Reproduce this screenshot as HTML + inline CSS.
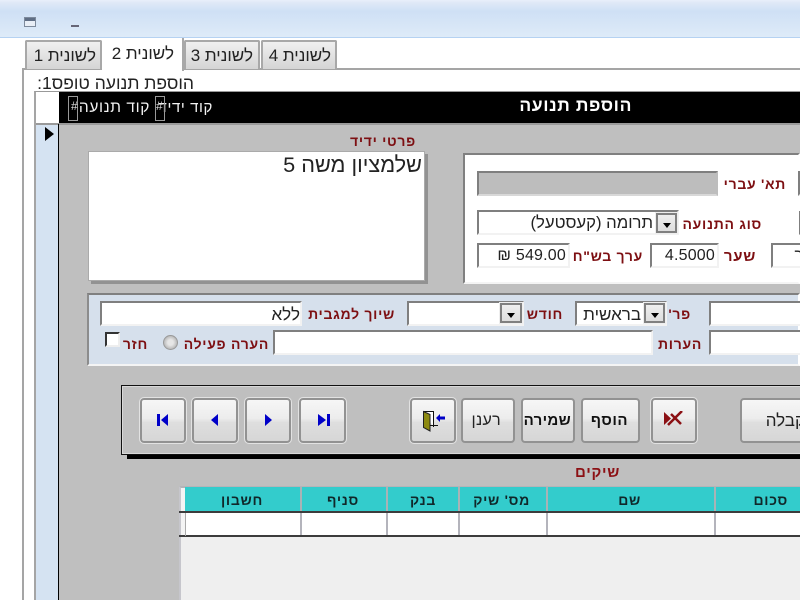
<!DOCTYPE html>
<html lang="he"><head><meta charset="utf-8"><title>הוספת תנועה</title>
<style>
*{box-sizing:border-box}
html,body{margin:0;padding:0;width:800px;height:600px;overflow:hidden;background:#fff}
body{position:relative;font-family:"Liberation Sans","DejaVu Sans",sans-serif;color:#111;filter:blur(.3px)}
.a{position:absolute}
.t{position:absolute;white-space:nowrap;direction:rtl;line-height:1}
.l{position:absolute;white-space:nowrap;direction:rtl;line-height:1;font-weight:bold;color:#7d0f12;font-size:14px;letter-spacing:.7px}
.h{position:absolute;white-space:nowrap;direction:rtl;line-height:1;font-weight:bold;color:#10282a;font-size:14px;letter-spacing:.7px}
.tab{position:absolute;background:linear-gradient(#efefef,#d4d4d4);border:2px solid #a8a8a8;border-bottom:0;border-radius:2px 2px 0 0}
.f{position:absolute;background:#fff;border:2px solid;border-color:#7f7f7f #f2f2f2 #f2f2f2 #7f7f7f}
.cb{position:absolute;background:linear-gradient(#eee,#ddd);border:2px solid #808080;outline:1px solid #eee}
.cb:after{content:"";position:absolute;left:5px;top:8px;border:4px solid transparent;border-top:5px solid #000;border-bottom:0}
.b{position:absolute;top:398px;height:45px;border:2px solid #929292;border-radius:4px;background:linear-gradient(#f6f6f6 0,#ececec 45%,#dedede 55%,#d6d6d6 100%)}
.o{outline:1px solid #e2e2e2}
.sep{position:absolute;width:2px;background:#a9b3b6}
.sep2{position:absolute;width:2px;background:#b4b4bc}
</style></head><body>

<div class="a" style="left:0;top:0;width:800px;height:38px;background:linear-gradient(#e9effa 0,#dfe8f6 8%,#cfe0f5 30%,#deebf8 100%);border-bottom:1px solid #b5d2f2"></div>
<svg class="a" style="left:24px;top:17px" width="13" height="11"><rect x=".5" y=".5" width="11" height="9" fill="#e8eef6" stroke="#7d8a9c"/><rect x="1" y="1" width="10" height="3" fill="#5f6e85"/></svg>
<div class="a" style="left:71px;top:25px;width:8px;height:2px;background:#667"></div>

<div class="a" style="left:22px;top:68px;width:778px;height:532px;background:#fff;border-left:2px solid #a5a5a5;border-top:2px solid #a5a5a5"></div>
<div class="tab" style="left:25px;top:40px;width:77px;height:29px"></div>
<div class="t" style="right:704px;top:47px;font-size:17px;color:#222">לשונית 1</div>
<div class="a" style="left:102px;top:38px;width:82px;height:33px;background:#fff;border-right:2px solid #a8a8a8"></div>
<div class="t" style="right:626px;top:45px;font-size:17px;color:#222">לשונית 2</div>
<div class="tab" style="left:184px;top:40px;width:76px;height:29px"></div>
<div class="t" style="right:547px;top:47px;font-size:17px;color:#222">לשונית 3</div>
<div class="tab" style="left:261px;top:40px;width:76px;height:29px"></div>
<div class="t" style="right:469px;top:47px;font-size:17px;color:#222">לשונית 4</div>

<div class="t" style="right:606px;top:75px;font-size:17.5px;color:#222">הוספת תנועה טופס1:</div>

<div class="a" style="left:34px;top:91px;width:766px;height:509px;background:#fff;border-left:2px solid #a5a5a5;border-top:1px solid #999"></div>
<div class="a" style="left:59px;top:92px;width:741px;height:31px;background:#000"></div>
<div class="a" style="left:36px;top:123px;width:764px;height:2px;background:#9a9a9a"></div>
<div class="a" style="left:36px;top:125px;width:22px;height:475px;background:#d5e3f2"></div>
<div class="a" style="left:58px;top:124px;width:1px;height:476px;background:#000"></div>
<div class="a" style="left:59px;top:125px;width:741px;height:475px;background:#bfbfbf"></div>
<div class="a" style="left:45px;top:127px;border:7px solid transparent;border-left:9px solid #000;border-right:0"></div>

<div class="t" style="right:587px;top:100px;font-size:15px;color:#f2f2f2;letter-spacing:.6px">קוד ידיד</div>
<div class="t" style="right:650px;top:100px;font-size:15.5px;color:#f2f2f2;letter-spacing:.6px">קוד תנועה</div>
<div class="a" style="left:68px;top:96px;width:10px;height:25px;border:1px solid #999"></div>
<div class="t" style="left:71px;top:100px;font-size:12px;color:#ddd;direction:ltr">#</div>
<div class="a" style="left:155px;top:96px;width:10px;height:25px;border:1px solid #999"></div>
<div class="t" style="left:156px;top:100px;font-size:12px;color:#ddd;direction:ltr">#</div>
<div class="t" style="right:168px;top:97px;font-size:17.5px;font-weight:bold;color:#fff;letter-spacing:.6px">הוספת תנועה</div>

<div class="l" style="right:384px;top:134px">פרטי ידיד</div>
<div class="a" style="left:88px;top:151px;width:337px;height:130px;background:#fff;border:1px solid #aaa;box-shadow:3px 3px 0 #929292"></div>
<div class="t" style="right:378px;top:154px;font-size:21.7px;color:#222">שלמציון משה 5</div>

<div class="a" style="left:463px;top:153px;width:337px;height:131px;background:#fff;border:2px solid;border-color:#808080 #fff #f4f4f4 #808080"></div>
<div class="f" style="left:477px;top:171px;width:241px;height:25px;background:#bdbdbd;border-color:#7f7f7f #bdbdbd #d8d8d8 #7f7f7f"></div>
<div class="l" style="right:14px;top:177px;font-size:14px">תא' עברי</div>
<div class="f" style="left:798px;top:171px;width:10px;height:25px"></div>
<div class="f" style="left:477px;top:210px;width:202px;height:25px"></div>
<div class="t" style="right:147px;top:215px;font-size:16.7px;color:#222">תרומה (קעסטעל)</div>
<div class="cb" style="left:656px;top:213px;width:21px;height:20px"></div>
<div class="l" style="right:38px;top:217px;font-size:14px">סוג התנועה</div>
<div class="f" style="left:799px;top:211px;width:10px;height:24px"></div>
<div class="f" style="left:477px;top:243px;width:93px;height:25px"></div>
<div class="t" style="right:234px;top:248px;font-size:16px;color:#222;letter-spacing:.2px">549.00 ₪</div>
<div class="l" style="right:157px;top:249px;font-size:14px">ערך בש"ח</div>
<div class="f" style="left:650px;top:243px;width:69px;height:25px"></div>
<div class="t" style="right:85px;top:248px;font-size:16px;color:#222;letter-spacing:.2px">4.5000</div>
<div class="l" style="right:44px;top:249px;font-size:15px">שער</div>
<div class="f" style="left:771px;top:243px;width:40px;height:25px"></div>
<div class="t" style="right:-3px;top:248px;font-size:16px;color:#222">ר</div>

<div class="a" style="left:87px;top:293px;width:713px;height:73px;background:#d6e0ec;border:2px solid;border-color:#808080 #fff #f4f4f4 #8c8c8c"></div>
<div class="f" style="left:100px;top:301px;width:202px;height:25px"></div>
<div class="t" style="right:500px;top:306px;font-size:17px;color:#222">ללא</div>
<div class="l" style="right:405px;top:307px">שיוך למגבית</div>
<div class="f" style="left:407px;top:301px;width:117px;height:25px"></div>
<div class="cb" style="left:500px;top:303px;width:22px;height:20px"></div>
<div class="l" style="right:237px;top:307px">חודש</div>
<div class="f" style="left:575px;top:301px;width:92px;height:25px"></div>
<div class="t" style="right:159px;top:306px;font-size:17px;color:#222">בראשית</div>
<div class="cb" style="left:644px;top:303px;width:21px;height:20px"></div>
<div class="l" style="right:109px;top:307px">פר'</div>
<div class="f" style="left:709px;top:301px;width:100px;height:25px"></div>
<div class="a" style="left:105px;top:332px;width:15px;height:15px;background:#fff;border:2px solid;border-color:#333 #eee #eee #333"></div>
<div class="l" style="right:652px;top:337px">חזר</div>
<div class="a" style="left:163px;top:335px;width:15px;height:15px;border-radius:50%;background:radial-gradient(#e6e6e6 30%,#bbb 70%);border:1px solid #999"></div>
<div class="l" style="right:531px;top:337px">הערה פעילה</div>
<div class="f" style="left:273px;top:330px;width:380px;height:25px"></div>
<div class="l" style="right:98px;top:337px">הערות</div>
<div class="f" style="left:709px;top:330px;width:100px;height:25px"></div>

<div class="a" style="left:127px;top:390px;width:680px;height:69px;background:#000"></div>
<div class="a" style="left:121px;top:385px;width:690px;height:70px;background:#bfbfbf;border:1px solid #111;outline:1px solid #d8d8d8;outline-offset:-2px"></div>

<div class="b o" style="left:140px;width:46px"><svg class="a" style="left:15px;top:14px" width="14" height="14"><rect x="0" y="0" width="3" height="12" fill="#0000c8"/><path d="M11 0V12L4 6Z" fill="#0000c8"/></svg></div>
<div class="b o" style="left:192px;width:46px"><svg class="a" style="left:15px;top:14px" width="14" height="14"><path d="M9 0V12L2 6Z" fill="#0000c8"/></svg></div>
<div class="b o" style="left:245px;width:46px"><svg class="a" style="left:15px;top:14px" width="14" height="14"><path d="M3 0V12L10 6Z" fill="#0000c8"/></svg></div>
<div class="b o" style="left:299px;width:47px"><svg class="a" style="left:15px;top:14px" width="14" height="14"><path d="M2 0V12L10 6Z" fill="#0000c8"/><rect x="11" y="0" width="3" height="12" fill="#0000c8"/></svg></div>

<div class="b o" style="left:410px;width:46px"><svg class="a" style="left:10px;top:8px" width="28" height="28"><path d="M1.500 3.500H11.500V19" fill="#fff" stroke="#111" stroke-width="1"/><path d="M1.500 3.500L8 6.500V23L1.500 19.500Z" fill="#8d8a10" stroke="#222" stroke-width="1"/><path d="M8 17.500H16" stroke="#111"/><path d="M14 10L18 6V8.500H23V11.500H18V14Z" fill="#0000c8"/></svg></div>
<div class="b" style="left:461px;width:54px"></div>
<div class="t" style="right:299px;top:413px;font-size:16px;color:#222;letter-spacing:.3px">רענן</div>
<div class="b" style="left:521px;width:54px"></div>
<div class="t" style="right:229px;top:413px;font-size:15px;font-weight:bold;color:#111;letter-spacing:.3px">שמירה</div>
<div class="b" style="left:581px;width:59px"></div>
<div class="t" style="right:172px;top:413px;font-size:15px;font-weight:bold;color:#111;letter-spacing:.5px">הוסף</div>
<div class="b o" style="left:651px;width:46px"><svg class="a" style="left:11px;top:11px" width="26" height="22"><path d="M0 1V14L7 7.500Z" fill="#8b1014"/><path d="M4 14L18 0M7 3L17 13" stroke="#8b1014" stroke-width="2.500"/></svg></div>
<div class="b" style="left:740px;width:80px"></div>
<div class="t" style="right:-5px;top:412px;font-size:17px;color:#222">קבלה</div>

<div class="l" style="right:180px;top:465px;font-size:15px;color:#8c1014">שיקים</div>

<div class="a" style="left:179px;top:486px;width:621px;height:114px;background:#efefef;border-left:2px solid #c6c6cc;border-top:2px solid #b4b4b8"></div>
<div class="a" style="left:181px;top:488px;width:4px;height:23px;background:#f4f4f4"></div>
<div class="a" style="left:181px;top:513px;width:4px;height:23px;background:#f4f4f4"></div>
<div class="a" style="left:185px;top:487px;width:615px;height:24px;background:#33cccc"></div>
<div class="a" style="left:185px;top:513px;width:615px;height:23px;background:#fff"></div>
<div class="a" style="left:179px;top:511px;width:621px;height:2px;background:#3c3c3c"></div>
<div class="a" style="left:179px;top:535px;width:621px;height:2px;background:#3c3c3c"></div>
<div class="a" style="left:185px;top:513px;width:1px;height:23px;background:#aaa"></div>
<div class="sep" style="left:300px;top:487px;height:24px"></div><div class="sep2" style="left:300px;top:513px;height:22px"></div>
<div class="sep" style="left:386px;top:487px;height:24px"></div><div class="sep2" style="left:386px;top:513px;height:22px"></div>
<div class="sep" style="left:458px;top:487px;height:24px"></div><div class="sep2" style="left:458px;top:513px;height:22px"></div>
<div class="sep" style="left:546px;top:487px;height:24px"></div><div class="sep2" style="left:546px;top:513px;height:22px"></div>
<div class="sep" style="left:714px;top:487px;height:24px"></div><div class="sep2" style="left:714px;top:513px;height:22px"></div>
<div class="h" style="right:537px;top:493px">חשבון</div>
<div class="h" style="right:441px;top:493px">סניף</div>
<div class="h" style="right:364px;top:493px">בנק</div>
<div class="h" style="right:270px;top:493px">מס' שיק</div>
<div class="h" style="right:159px;top:493px">שם</div>
<div class="h" style="right:12px;top:493px">סכום</div>

</body></html>
